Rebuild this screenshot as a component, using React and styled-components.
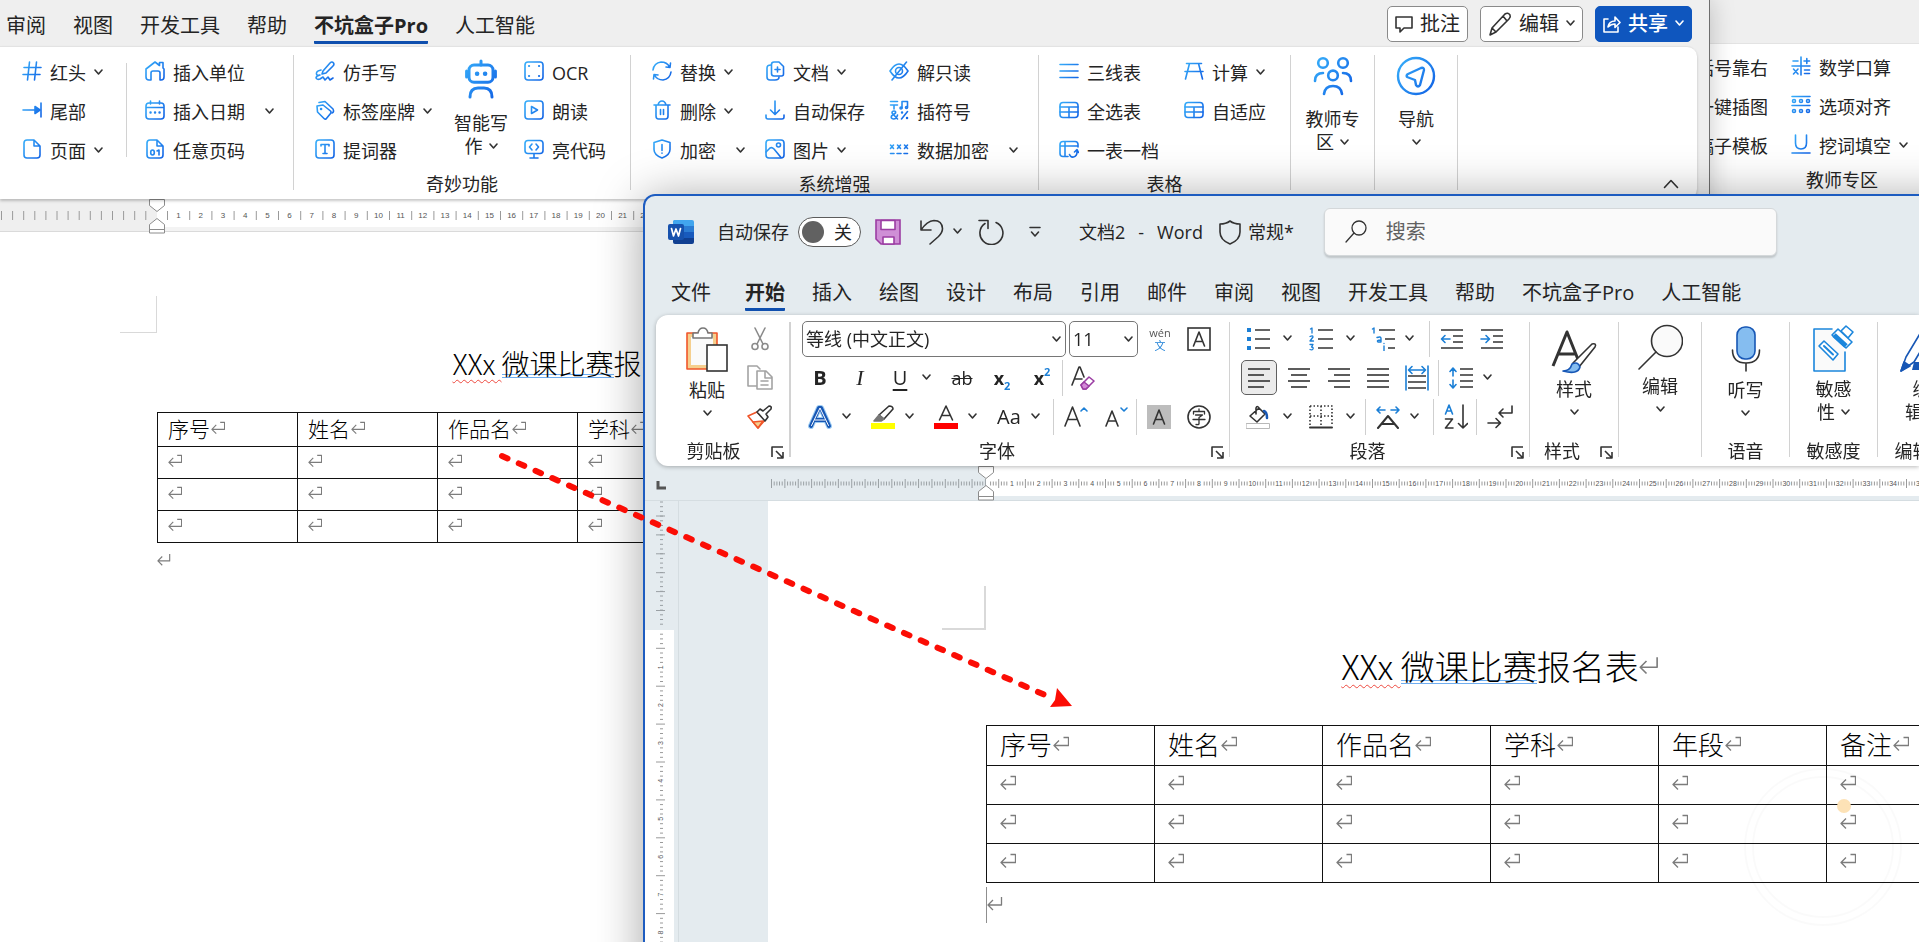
import React from "react";
import styled, { createGlobalStyle, css } from "styled-components";

const Global = createGlobalStyle`
  * { box-sizing: border-box; }
  body {
    margin: 0;
    background: #fff;
    color: #242424;
    font-family: "Open Sans", "Noto Sans CJK SC", sans-serif;
    font-size: 18px;
    line-height: 24px;
  }
  button, input, select { font: inherit; color: inherit; }
`;

/* ---------- shared pieces ---------- */

const Desktop = styled.main`
  position: relative;
  min-height: 100vh;
  overflow: hidden;
  background: #efefef;
`;

const Window = styled.section`
  position: absolute;
  isolation: isolate;
  overflow: hidden;
  bottom: 0;
  display: flex;
  flex-direction: column;
`;

const BackWindow = styled(Window)`
  top: 0;
  right: 0;
  width: 240px;
  background: #efefef;
`;

const SourceWindow = styled(Window)`
  top: 0;
  left: 0;
  right: 209px;
  background: #efefef;
  border-right: 1px solid #6e6e6e;
  box-shadow: 0 0 24px rgba(0, 0, 0, 0.22);
`;

const TargetWindow = styled(Window)`
  top: 194px;
  left: 643px;
  right: -2px;
  background: #e4ebef;
  border: 2px solid #1d5cc0;
  border-bottom: 0;
  border-radius: 12px 0 0 0;
`;

const TargetShadow = styled.div`
  position: absolute;
  top: 194px;
  left: 643px;
  right: -80px;
  bottom: -80px;
  border-radius: 12px;
  box-shadow: 0 4px 48px rgba(0, 0, 0, 0.36);
`;

const Plain = styled.button`
  border: 0;
  padding: 0;
  background: none;
  cursor: pointer;
  white-space: nowrap;
`;

const Tab = styled(Plain)`
  font-size: 20px;
  line-height: 30px;
  height: 34px;
  font-weight: ${(p) => (p.$active ? 700 : 400)};
  border-bottom: 3px solid ${(p) => (p.$active ? "#0f4fae" : "transparent")};
  border-radius: 1px;
`;

const Divider = styled.span`
  flex: none;
  width: ${(p) => (p.$thin ? 1 : 2)}px;
  background: #d2d2d2;
  margin: ${(p) => p.$m || "8px 0 9px"};
`;

const Group = styled.section`
  flex: none;
  display: flex;
  flex-direction: column;
  width: ${(p) => p.$w}px;
`;

const GroupLabel = styled.footer`
  display: flex;
  justify-content: center;
  align-items: center;
  line-height: 26px;
  position: relative;
`;

const Columns = styled.div`
  display: flex;
  height: 124px;
  padding: 6px 0 0 ${(p) => p.$pad || 0}px;
`;

const Stack = styled.div`
  flex: none;
  width: ${(p) => p.$w}px;
`;

const Inset = styled.div`
  padding-left: ${(p) => p.$pad}px;
`;

const Item = styled(Plain)`
  display: flex;
  align-items: center;
  height: 39px;
  gap: 8px;
  > svg:first-child { margin-bottom: 3px; }
`;

const Far = styled.span`
  display: flex;
  margin-left: ${(p) => p.$gap}px;
`;

const BigButton = styled(Plain)`
  flex: none;
  width: ${(p) => p.$w}px;
  display: flex;
  flex-direction: column;
  align-items: center;
  padding-top: ${(p) => p.$top || 3}px;
  line-height: 23px;
  > svg { margin-bottom: ${(p) => p.$gap || 0}px; }
`;

const BigLine = styled.span`
  display: flex;
  align-items: center;
  gap: 6px;
  height: 23px;
`;

const Svg = styled.svg`
  flex: none;
  display: block;
  fill: none;
  stroke: ${(p) => (p.$blue ? "url(#sky)" : p.$color || "#333")};
  stroke-width: ${(p) => p.$weight || "1.6"};
  stroke-linecap: round;
  stroke-linejoin: round;
`;

const Chevron = () => (
  <Svg width="9" height="8" viewBox="0 0 9 8" aria-hidden="true">
    <path d="M1 1l3.500 4L8 1" />
  </Svg>
);

const B = "url(#sky)";
const ICONS = {
  hash: <path d="M7.500 1L5.500 19M14.500 1L12.500 19M2 6.500h17M1 13.500h17" />,
  tail: <><path d="M1 10h12M19 3v14" /><path d="M13 6.500l5 3.500-5 3.500z" fill={B} /></>,
  page: <path d="M5 1h7l6 6v9q0 3-3 3H5q-3 0-3-3V4q0-3 3-3zM12 1.500V7h5.500" />,
  home: <path d="M1 8l9-7 4.500 3.500V1.500H18V7l1 1v8q0 3-3 3h-1v-7q0-2-2-2H8q-2 0-2 2v7H4q-3 0-3-3z" />,
  date: <><path d="M4 3h12q3 0 3 3v10q0 3-3 3H4q-3 0-3-3V6q0-3 3-3zM1 7.500h18M5.500 1v3M14.500 1v3" /><path d="M5.500 12.500h.1M10 12.500h.1M14.500 12.500h.1" strokeWidth="2.400" /></>,
  num: <><path d="M5 1h7l6 6v9q0 3-3 3H5q-3 0-3-3V4q0-3 3-3zM12 1.500V7h5.500" /><ellipse cx="7.500" cy="13.500" rx="1.800" ry="2.500" /><path d="M12 12l2-1v5" /></>,
  hand: <><path d="M8 10l7-8q2-2 3.500 0 1 1.500-.5 3l-7 7-4 1z" /><path d="M6 9q-5 1-4.500 4Q2 15 5 14q-4 1-4 3 1 2 4 1l3-2 2 3 3-3 2 3 3-2" /></>,
  tag: <><path d="M4 2.500L10 1.500l8 7.500q1.500 3-1 4" /><path d="M2 6l6-1 7.500 6q1 1 0 2.500L11 19q-1 .5-2-.5L2.500 12z" /><path d="M6 9h.1" strokeWidth="2.500" /></>,
  T: <><rect x="1" y="1" width="18" height="18" rx="3" /><path d="M6 7V5.500h8V7M10 5.500v9M8 14.500h4" /></>,
  ocr: <><rect x="1" y="1" width="18" height="18" rx="3" /><path d="M5 5h.1M15 5h.1M5 15h.1M15 15h.1" strokeWidth="2.200" /></>,
  play: <><rect x="1" y="1" width="18" height="18" rx="3" /><path d="M7.500 6.500v7l6-3.500z" /></>,
  code: <><path d="M4 1.500h12q3 0 3 3v7q0 3-3 3H4q-3 0-3-3v-7q0-3 3-3zM10 15v4M6 19h8" /><path d="M8 5L5.500 8 8 11M12 5l2.500 3-2.500 3" /></>,
  swap: <path d="M1 9q1-7 8-8 6 0 8.500 5M18.500 2l-.5 4.500-4-.5M19 11q-1 7-8 8-6 0-8.500-5M1.500 18l.5-4.500 4 .5" />,
  trash: <path d="M2 5h16M6 5q1-4 4-4t4 4M4 5v11q0 3 2.500 3h7q2.500 0 2.500-3V5M8.500 9.500v5M11.500 9.500v5" />,
  shield: <><path d="M10 1l8 2.500v7q0 5.500-8 8.500-8-3-8-8.500v-7z" /><path d="M10 5.500v6M10 14v.2" /></>,
  docs: <><path d="M9 1h5l4.500 4.500V13q0 2-2 2H9q-2.500 0-2.500-2.500v-9Q6.500 1 9 1z" /><path d="M6 4Q2 4 2 7v9q0 3 3 3h5q4 0 4-3M12.500 6v5M10 8.500h5" /></>,
  down: <path d="M10 1v13M5.500 10l4.500 4.500 4.500-4.500M1 15v2q0 2 2 2h14q2 0 2-2v-2" />,
  image: <><rect x="1" y="1" width="18" height="18" rx="3" /><circle cx="13.500" cy="6" r="2" /><path d="M1 13l4-4q2-1 4 1l7 8.500" /></>,
  eye: <><path d="M1 10q9-14 18 0-9 14-18 0z" /><circle cx="10" cy="10" r="3.500" /><path d="M17.500 1L3 19" /></>,
  symbols: <><path d="M1.500 1.500h7M1.500 5h7M5 5v4M13 8V1.500h5.500V7" /><circle cx="12" cy="8" r="1" /><circle cx="17.500" cy="7.500" r="1" /><path d="M8.500 19L3 13q0-2 2-2t1.500 2L2.500 16q-1 2.500 2 3 3 0 4-4M12.500 19l6-7.500" /><path d="M13 12.500h.1M18 18h.1" strokeWidth="2.400" /></>,
  data: <path d="M1.500 6l3 3.500M4.500 6l-3 3.500M8.500 6l3 3.500M11.500 6l-3 3.500M15.500 6l3 3.500M18.500 6l-3 3.500M1.500 14.500h3.500M8 14.500h4M15 14.500h3.500" />,
  lines: <path d="M1 3.500h18M1 10h18M1 16.500h18" />,
  table: <><rect x="1" y="2.500" width="18" height="15" rx="3" /><path d="M1 7h18M1 12h18M10 7v10.500" /></>,
  tableArrow: <><path d="M9 17.500H4q-3 0-3-3v-9q0-3 3-3h12q3 0 3 3V8M1 7h18M6 2.500v15" /><path d="M10.500 15.500q1 3 4 2.500 4-1 3.500-6.500M15.500 13l2.500-2.500 1.500 3" /></>,
  calc: <path d="M2.500 2.500h15M1 10.500h18M5.500 2.500L1.500 18M14.500 2.500l4 15.500" />,
  math: <path d="M10 1v18M1 10h18M2 5h5M13 5h5.500M15.800 2.500v5M2.500 13l4.500 5M7 13l-4.500 5M13.500 14h5M13.500 17.500h5" />,
  options: <><path d="M1 1.500h18M1 10.500h18" /><circle cx="3" cy="6" r="1.500" /><circle cx="10" cy="6" r="1.500" /><circle cx="17" cy="6" r="1.500" /><circle cx="3" cy="16" r="1.500" /><circle cx="10" cy="16" r="1.500" /><circle cx="17" cy="16" r="1.500" /></>,
  under: <path d="M4.500 1v8q0 6 5.500 6t5.500-6V1M1 19h18" />,
};

const Icon = ({ name }) => (
  <Svg $blue width="20" height="20" viewBox="0 0 20 20" aria-hidden="true">
    {ICONS[name]}
  </Svg>
);

const RibbonItem = ({ icon, label, menu, far = 0 }) => (
  <Item type="button">
    <Icon name={icon} />
    <span>{label}</span>
    {menu && <Far $gap={far}><Chevron /></Far>}
  </Item>
);

/* ---------- rulers and paragraph marks ---------- */

const RulerStrip = styled.div`
  flex: none;
  display: flex;
  position: relative;
  height: ${(p) => p.$h}px;
  border-bottom: 1px solid ${(p) => p.$line};
`;

const RulerPart = styled.div`
  flex: ${(p) => (p.$w ? "none" : "1")};
  width: ${(p) => (p.$w ? p.$w + "px" : "auto")};
  min-width: 0;
  overflow: hidden;
  background: ${(p) => p.$bg};
  border-bottom: ${(p) => (p.$edge ? "4px solid " + p.$edge : "0")};
`;

const IndentMarker = styled.svg`
  position: absolute;
  top: 0;
  left: ${(p) => p.$x}px;
  fill: #fff;
  stroke: #8c8c8c;
`;

const RulerSvg = styled.svg`
  display: block;
  text {
    fill: #555;
    font-family: "Liberation Sans", sans-serif;
    text-anchor: middle;
  }
`;

const Marker = ({ x }) => (
  <IndentMarker $x={x} width="16" height="35" viewBox="0 0 16 35" aria-hidden="true">
    <path d="M.5 .5h15v6L8 12.500 .5 6.500zM.5 25.500L8 19.500l7.500 6v8.500H.5zM.5 30.500h15" />
  </IndentMarker>
);

const range = (n) => Array.from({ length: n }, (_, i) => i);

const SourceRuler = () => (
  <RulerStrip $h={33} $line="#dadada">
    <RulerPart $w={157} $bg="#efefef">
      <RulerSvg width="157" height="30">
        {range(14).map((i) => <path key={i} d={`M${1.5 + i * 11.1} 12v9`} stroke="#9a9a9a" />)}
      </RulerSvg>
    </RulerPart>
    <RulerPart $bg="#fff" $edge="#f3f3f3">
      <RulerSvg width="1500" height="29">
        {range(60).map((i) => (
          <g key={i}>
            <path d={`M${10.5 + i * 22.2} 12v9`} stroke="#9a9a9a" />
            <text x={21.6 + i * 22.2} y="19" fontSize="8">{i + 1}</text>
          </g>
        ))}
      </RulerSvg>
    </RulerPart>
    <Marker x={149} />
  </RulerStrip>
);

const MINOR = [2.7, 5.4, 8.1, 18.6, 21.3, 24];

const TargetRuler = () => (
  <RulerStrip $h={35} $line="#d5dde1">
    <RulerPart $w={341} $bg="#e4ebef">
      <RulerSvg width="341" height="34">
        <path d="M13 15v7h8" stroke="#555" strokeWidth="3" fill="none" />
        {range(17).map((i) => (
          <g key={i} stroke="#9aa0a4">
            <path d={`M${126.5 + i * 13.37} 13v9`} />
            {[2.7, 5.4, 8, 10.7].map((d) => (
              <path key={d} d={`M${126.5 + i * 13.37 + d} 15.500v4`} />
            ))}
          </g>
        ))}
      </RulerSvg>
    </RulerPart>
    <RulerPart $bg="#fff" $edge="#e4ebef">
      <RulerSvg width="1400" height="30">
        {range(50).map((i) => (
          <g key={i} stroke="#9a9a9a">
            {MINOR.map((d) => (
              <path key={d} d={`M${12.7 + (i - 1) * 26.7 + d} 15.500v4`} />
            ))}
            <path d={`M${12.7 + i * 26.7} 13v9`} />
            <text x={26 + i * 26.7} y="20" fontSize="7" stroke="none">{i + 1}</text>
          </g>
        ))}
      </RulerSvg>
    </RulerPart>
    <Marker x={333} />
  </RulerStrip>
);

const SideRulerBox = styled.div`
  flex: none;
  width: 34px;
  padding-right: 4px;
  border-right: 1px solid #d5dde1;
`;

const SideRuler = () => (
  <SideRulerBox>
    <RulerSvg width="29" height="900">
      <rect x="0" y="129" width="29" height="771" fill="#fff" />
      {range(6).map((i) => <path key={i} d={`M11 ${15 + i * 18.9}h9`} stroke="#9aa0a4" />)}
      {range(27).map((i) => <path key={i} d={`M15 ${1 + i * 4.7}h3`} stroke="#9aa0a4" />)}
      {range(16).map((i) => (
        <g key={i} stroke="#9a9a9a">
          <path d={`M11 ${147.3 + i * 37.9}h9`} />
          {[-14.1, -9.4, -4.7, 4.7, 9.4, 14.1].map((d) => (
            <path key={d} d={`M15 ${147.3 + i * 37.9 + d}h3`} />
          ))}
          <text transform={`translate(18 ${166.2 + i * 37.9}) rotate(-90)`} fontSize="7" stroke="none">
            {i + 1}
          </text>
        </g>
      ))}
    </RulerSvg>
  </SideRulerBox>
);

const CellMark = ({ s = 16 }) => (
  <Svg $color="#7c7c7c" $weight="1.3" width={s} height={s} viewBox="0 0 16 16" aria-hidden="true">
    <path d="M10.500 1.500h5v8H1M6 4.500l-5 5 5 5" strokeLinecap="butt" />
  </Svg>
);

const ParagraphMark = ({ s = 16 }) => (
  <Svg $color="#7c7c7c" $weight="1.3" width={s} height={s} viewBox="0 0 16 16" aria-hidden="true">
    <path d="M14.500 1v8H1M6 4L1 9l5 5" strokeLinecap="butt" />
  </Svg>
);

/* ---------- document ---------- */

const Page = styled.article`
  flex: 1;
  min-width: 0;
  background: #fff;
  padding-left: ${(p) => p.$pad}px;
  overflow: hidden;
  color: #000;
  font-weight: 300;
  font-family: "Noto Sans CJK SC", sans-serif;
`;

const Corner = styled.div`
  width: ${(p) => p.$s}px;
  height: ${(p) => p.$s}px;
  margin: ${(p) => p.$top}px 0 0 -${(p) => p.$s}px;
  border: solid #d9d9d9;
  border-width: 0 ${(p) => p.$b}px ${(p) => p.$b}px 0;
`;

const Title = styled.h1`
  width: ${(p) => p.$w}px;
  height: 44px;
  margin: ${(p) => p.$m};
  display: flex;
  justify-content: center;
  align-items: center;
  font-size: ${(p) => p.$size}px;
  line-height: 44px;
  font-weight: 300;
  white-space: pre;
`;

const Misspelt = styled.span`
  text-decoration: underline wavy #ee4a40 1px;
  text-underline-offset: 4px;
`;

const Flagged = styled.span`
  line-height: 0.8;
  margin-top: 4px;
  border-bottom: 4px double #6fadf0;
`;

const TitleMark = styled.span`
  width: 0;
`;

const Sheet = styled.table`
  width: ${(p) => p.$w}px;
  table-layout: fixed;
  border-collapse: collapse;
  font-size: ${(p) => p.$size}px;
  th, td {
    height: ${(p) => p.$row}px;
    border: 1px solid #111;
    padding: 0 0 4px ${(p) => p.$pad}px;
    text-align: left;
    font-weight: 300;
    line-height: 28px;
  }
  th { height: ${(p) => p.$head}px; }
`;

const CellText = styled.span`
  display: flex;
  align-items: center;
  gap: 1px;
`;

const LastLine = styled.p`
  margin: ${(p) => p.$top}px 0 0;
  height: 36px;
  display: flex;
  align-items: center;
  padding-bottom: 2px;
  border-left: ${(p) => (p.$caret ? "1px solid #8f8f8f" : "0")};
`;

const HEADERS = ["序号", "姓名", "作品名", "学科", "年段", "备注"];

const EntryTable = ({ mark, ...sizes }) => (
  <Sheet {...sizes}>
    <thead>
      <tr>
        {HEADERS.map((h) => (
          <th key={h} scope="col"><CellText>{h}<CellMark s={mark} /></CellText></th>
        ))}
      </tr>
    </thead>
    <tbody>
      {range(3).map((r) => (
        <tr key={r}>
          {HEADERS.map((h) => <td key={h}><CellText><CellMark s={mark} /></CellText></td>)}
        </tr>
      ))}
    </tbody>
  </Sheet>
);

const DocTitle = (props) => (
  <Title {...props}>
    <Misspelt>XXx </Misspelt>
    <Flagged>微课比赛</Flagged>
    <span>报名表</span>
    <TitleMark><ParagraphMark s={20} /></TitleMark>
  </Title>
);

/* ---------- source window ---------- */

const TopBar = styled.header`
  flex: none;
  display: flex;
  align-items: center;
  height: ${(p) => p.$h || 46}px;
`;

const SourceTabs = styled.nav`
  flex: 1;
  display: flex;
  gap: 27px;
  padding: 8px 0 0 6px;
`;

const Actions = styled.div`
  display: flex;
  gap: 12px;
  padding: 2px 17px 0 0;
`;

const Action = styled(Plain)`
  display: flex;
  align-items: center;
  gap: 7px;
  height: 36px;
  padding: 0 7px;
  font-size: 20px;
  background: #fff;
  border: 1px solid #8a8a8a;
  border-radius: 5px;
  ${(p) =>
    p.$primary &&
    css`
      background: #0f56be;
      border-color: #0f56be;
      color: #fff;
      font-weight: 500;
      svg { stroke: #fff; }
    `}
`;

const SourceRibbon = styled.div`
  flex: none;
  display: flex;
  height: 153px;
  margin-right: 12px;
  padding-left: 22px;
  background: #fff;
  border-top: 1px solid #e3e3e3;
  border-radius: 0 10px 10px 0;
  box-shadow: 0 2px 3px rgba(0, 0, 0, 0.22);
  position: relative;
  z-index: 1;
`;

const Collapse = styled(Plain)`
  margin: auto 18px 10px auto;
`;

const People = () => (
  <Svg $blue $weight="1.3" width="40" height="40" viewBox="0 0 20 20" aria-hidden="true">
    <circle cx="5" cy="3.500" r="2.400" /><circle cx="15" cy="3.500" r="2.400" /><circle cx="10" cy="9.700" r="2.400" />
    <path d="M1 12.500q0-4 4-4M19 12.500q0-4-4-4M5.500 19q.5-4 4.500-4t4.500 4" />
  </Svg>
);
const Compass = () => (
  <Svg $blue $weight="1.2" width="40" height="40" viewBox="0 0 20 20" aria-hidden="true">
    <circle cx="10" cy="10" r="9" />
    <path d="M5.500 10.500q-.5-1 .5-1.500l6.500-3q1.500-.5 1.500 1l-2 7.500q-1 1.500-2 0L9.500 12z" />
  </Svg>
);
const Robot = () => (
  <Svg $blue $weight="1.5" width="40" height="40" viewBox="0 0 20 20" aria-hidden="true">
    <rect x="4" y="3" width="12" height="8.600" rx="2.500" />
    <path d="M10 1v2M2.800 6v3M17.200 6v3M4.500 19q0-4.500 4-4.500h3q4 0 4 4.500" />
    <path d="M8 7.400h.1M12 7.400h.1" strokeWidth="2.200" />
  </Svg>
);

const SourceApp = () => (
  <SourceWindow aria-label="源文档">
    <TopBar>
      <SourceTabs>
        {["审阅", "视图", "开发工具", "帮助", "不坑盒子Pro", "人工智能"].map((t) => (
          <Tab key={t} type="button" $active={t === "不坑盒子Pro"}>{t}</Tab>
        ))}
      </SourceTabs>
      <Actions>
        <Action type="button">
          <Svg width="18" height="18" viewBox="0 0 18 18"><path d="M1 2h16v11H9l-4 4v-4H1z" /></Svg>批注
        </Action>
        <Action type="button">
          <Svg width="24" height="26" viewBox="0 0 24 26"><path d="M2 24l2-7L17 3q3-2 5 1 1 2-1 4L8 21zM4 17l4 4M15 5l4 5" /></Svg>编辑<Chevron />
        </Action>
        <Action type="button" $primary>
          <Svg width="18" height="18" viewBox="0 0 18 18"><path d="M5 4H1v13h14v-5M5 12q1-6 7-6V2l5 5.500-5 5V9q-4 0-7 3z" /></Svg>共享<Chevron />
        </Action>
      </Actions>
    </TopBar>
    <SourceRibbon>
      <Group $w={271}>
        <Columns>
          <Stack $w={104}>
            <RibbonItem icon="hash" label="红头" menu />
            <RibbonItem icon="tail" label="尾部" />
            <RibbonItem icon="page" label="页面" menu />
          </Stack>
          <Divider $thin $m="10px 0 14px" />
          <Inset $pad={18}>
            <RibbonItem icon="home" label="插入单位" />
            <RibbonItem icon="date" label="插入日期" menu far={12} />
            <RibbonItem icon="num" label="任意页码" />
          </Inset>
        </Columns>
      </Group>
      <Divider $thin />
      <Group $w={336}>
        <Columns $pad={21}>
          <Stack $w={139}>
            <RibbonItem icon="hand" label="仿手写" />
            <RibbonItem icon="tag" label="标签座牌" menu />
            <RibbonItem icon="T" label="提词器" />
          </Stack>
          <BigButton type="button" $w={54} $top={6} $gap={13}>
            <Robot />
            <BigLine>智能写</BigLine>
            <BigLine>作<Chevron /></BigLine>
          </BigButton>
          <Inset $pad={16}>
            <RibbonItem icon="ocr" label="OCR" />
            <RibbonItem icon="play" label="朗读" />
            <RibbonItem icon="code" label="亮代码" />
          </Inset>
        </Columns>
        <GroupLabel>奇妙功能</GroupLabel>
      </Group>
      <Divider $thin />
      <Group $w={407}>
        <Columns $pad={21}>
          <Stack $w={113}>
            <RibbonItem icon="swap" label="替换" menu />
            <RibbonItem icon="trash" label="删除" menu />
            <RibbonItem icon="shield" label="加密" menu far={12} />
          </Stack>
          <Stack $w={124}>
            <RibbonItem icon="docs" label="文档" menu />
            <RibbonItem icon="down" label="自动保存" />
            <RibbonItem icon="image" label="图片" menu />
          </Stack>
          <Stack $w={128}>
            <RibbonItem icon="eye" label="解只读" />
            <RibbonItem icon="symbols" label="插符号" />
            <RibbonItem icon="data" label="数据加密" menu far={12} />
          </Stack>
        </Columns>
        <GroupLabel>系统增强</GroupLabel>
      </Group>
      <Divider $thin />
      <Group $w={251}>
        <Columns $pad={20}>
          <Stack $w={125}>
            <RibbonItem icon="lines" label="三线表" />
            <RibbonItem icon="table" label="全选表" />
            <RibbonItem icon="tableArrow" label="一表一档" />
          </Stack>
          <Stack $w={100}>
            <RibbonItem icon="calc" label="计算" menu />
            <RibbonItem icon="table" label="自适应" />
          </Stack>
        </Columns>
        <GroupLabel>表格</GroupLabel>
      </Group>
      <Divider $thin />
      <Group $w={83}>
        <BigButton type="button" $w={83} $top={9} $gap={12}>
          <People />
          <BigLine>教师专</BigLine>
          <BigLine>区<Chevron /></BigLine>
        </BigButton>
      </Group>
      <Divider $thin />
      <Group $w={82}>
        <BigButton type="button" $w={82} $top={9} $gap={12}>
          <Compass />
          <BigLine>导航</BigLine>
          <BigLine><Chevron /></BigLine>
        </BigButton>
      </Group>
      <Divider $thin />
      <Collapse type="button" aria-label="折叠功能区">
        <Svg width="16" height="10" viewBox="0 0 16 10"><path d="M1.500 8.500L8 1.500l6.500 7" /></Svg>
      </Collapse>
    </SourceRibbon>
    <SourceRuler />
    <Page $pad={157}>
      <Corner $s={37} $b={1} $top={64} />
      <DocTitle $w={836} $size={28} $m="8px 0 27px" />
      <EntryTable mark={14} $w={841} $size={21} $row={32} $head={34} $pad={10} />
      <LastLine $top={0}><ParagraphMark s={14} /></LastLine>
    </Page>
  </SourceWindow>
);

/* ---------- back window ---------- */

const BackRibbon = styled.div`
  flex: none;
  display: flex;
  height: 156px;
  padding: 4px 0 0 17px;
  background: #fff;
  border-top: 1px solid #e3e3e3;
`;

const BackLabel = styled(GroupLabel)`
  padding-top: 2px;
`;

const BackApp = () => (
  <BackWindow aria-label="后台文档">
    <TopBar $h={43} />
    <BackRibbon>
      <Stack $w={95}>
        <Item type="button">括号靠右</Item>
        <Item type="button">一键插图</Item>
        <Item type="button">稿子模板</Item>
      </Stack>
      <Group $w={102}>
        <RibbonItem icon="math" label="数学口算" />
        <RibbonItem icon="options" label="选项对齐" />
        <RibbonItem icon="under" label="挖词填空" menu />
        <BackLabel>教师专区</BackLabel>
      </Group>
    </BackRibbon>
  </BackWindow>
);

/* ---------- target window ---------- */

const TitleBar = styled.header`
  flex: none;
  display: flex;
  align-items: center;
  height: 72px;
  padding-left: 23px;
  > * { flex: none; }
`;

const AutoSave = styled.label`
  display: flex;
  align-items: center;
  gap: 9px;
  margin: 0 14px 0 22px;
  position: relative;
  input { position: absolute; opacity: 0; right: 0; width: 63px; height: 30px; margin: 0; }
`;

const SwitchTrack = styled.span`
  display: flex;
  align-items: center;
  justify-content: space-between;
  width: 63px;
  height: 30px;
  padding: 0 8px 0 3px;
  background: #fff;
  border: 1px solid #5c5c5c;
  border-radius: 15px;
  &::before {
    content: "";
    width: 22px;
    height: 22px;
    border-radius: 50%;
    background: #616161;
  }
`;

const ToolIcon = styled(Plain)`
  display: flex;
  align-items: center;
  gap: ${(p) => p.$gap || 9}px;
  margin-right: ${(p) => p.$mr || 0}px;
`;

const FileName = styled.span`
  display: flex;
  gap: 13px;
  margin-right: 16px;
`;

const Search = styled.label`
  display: flex;
  align-items: center;
  gap: 19px;
  width: 453px;
  height: 48px;
  margin-left: 30px;
  padding-left: 20px;
  background: #fafafa;
  border: 1px solid #d4d8da;
  border-radius: 6px;
  box-shadow: 0 2px 2px rgba(0, 0, 0, 0.16);
  input {
    flex: 1;
    min-width: 0;
    border: 0;
    outline: 0;
    padding: 0;
    background: none;
    font-size: 20px;
    &::placeholder { color: #616161; opacity: 1; }
  }
`;

const TargetTabs = styled.nav`
  flex: none;
  display: flex;
  gap: 27px;
  height: 47px;
  padding: 9px 0 4px 26px;
  > button:first-child { margin-right: 7px; }
`;

const TargetRibbon = styled.div`
  display: flex;
  height: 151px;
  margin-left: 11px;
  overflow: hidden;
  background: #fff;
  border-radius: 12px 0 0 12px;
`;

const RibbonShade = styled.div`
  flex: none;
  position: relative;
  z-index: 1;
  filter: drop-shadow(0 1px 2px rgba(0, 0, 0, 0.28));
`;

const HomeGroup = styled(Group)`
  padding-top: 4px;
`;

const ToolRow = styled.div`
  display: flex;
  align-items: center;
  height: 39px;
  padding-left: ${(p) => p.$pad || 0}px;
`;

const Tool = styled(Plain)`
  flex: none;
  display: flex;
  align-items: center;
  justify-content: center;
  width: ${(p) => p.$w || 40}px;
  height: 35px;
  font-size: 20px;
`;

const PressedTool = styled(Tool)`
  width: 36px;
  margin: 0 2px 0 1px;
  background: #ebebeb;
  border: 1px solid #5f5f5f;
  border-radius: 5px;
`;

const Split = styled(Plain)`
  flex: none;
  display: flex;
  align-items: center;
  gap: ${(p) => p.$gap || 10}px;
  width: ${(p) => p.$w || 63}px;
  height: 35px;
  padding-left: 8px;
  font-size: 20px;
  > :first-child { width: 24px; text-align: center; }
`;

const Bold = styled.b``;
const Italic = styled.i`
  font-family: "Liberation Serif", serif;
  font-size: 22px;
`;
const Under = styled.u`
  text-underline-offset: 4px;
`;
const Strike = styled.s`
  font-size: 18px;
`;
const Script = styled.span`
  font-weight: 700;
  font-size: 18px;
  sub, sup { color: #1b7fd6; font-size: 11px; line-height: 0; }
  sub { vertical-align: -5px; }
  sup { vertical-align: 9px; }
`;

const Pinyin = styled.span`
  display: flex;
  flex-direction: column;
  font-size: 11px;
  line-height: 13px;
  color: #555;
  em { font-style: normal; color: #1b7fd6; }
`;

const SelectBox = styled.span`
  display: flex;
  position: relative;
  width: ${(p) => p.$w}px;
  height: 36px;
  margin-right: 3px;
  select {
    flex: 1;
    appearance: none;
    padding: 0 20px 0 3px;
    background: #fff;
    border: 1px solid #767676;
    border-radius: 5px;
  }
  svg { position: absolute; right: 5px; top: 15px; pointer-events: none; }
`;

const Launcher = styled(Plain)`
  position: absolute;
  right: 5px;
  bottom: 5px;
`;

const HomeLabel = styled(GroupLabel)`
  margin-top: 2px;
  padding-right: ${(p) => p.$pr || 0}px;
`;

const SmallRule = styled.span`
  flex: none;
  width: 1px;
  height: 36px;
  background: #cfcfcf;
  margin: 0 ${(p) => p.$r || 0}px 0 ${(p) => p.$l || 0}px;
`;

const LaunchIcon = () => (
  <Launcher type="button" aria-label="更多设置">
    <Svg width="13" height="13" viewBox="0 0 13 13"><path d="M1 11V1h11M5 5l7 7M12 6v6H6" strokeLinecap="butt" /></Svg>
  </Launcher>
);

const HomeBig = styled(BigButton)`
  width: 100%;
  height: 117px;
`;

const Clip = styled.div`
  display: flex;
  height: 117px;
  padding-left: 21px;
`;

const ClipStack = styled.div`
  display: flex;
  flex-direction: column;
  gap: 4px;
  padding: 2px 0 0 9px;
`;

const Lines = ({ rows }) => (
  <Svg width="24" height="24" viewBox="0 0 24 24">
    {rows.map(([a, b], i) => <path key={i} d={`M${a} ${3 + i * 6}H${b}`} strokeLinecap="butt" />)}
  </Svg>
);

const BLUE = "#1b7fd6";

const Clipboard = () => (
  <HomeGroup $w={133}>
    <Clip>
      <BigButton type="button" $w={60} $top={7} $gap={3}>
        <Svg width="44" height="50" viewBox="0 0 44 50">
          <rect x="2" y="7" width="30" height="36" fill="#f5cf8e" stroke="#f0562a" />
          <path d="M6 11h22v28H6z" fill="#fafafa" stroke="none" />
          <path d="M8 12V7h5q1-5 5-5t5 5h4v5z" fill="#fff" stroke="#777" />
          <rect x="22" y="19" width="20" height="26" fill="#fff" strokeLinejoin="miter" />
        </Svg>
        <BigLine>粘贴</BigLine>
        <BigLine><Chevron /></BigLine>
      </BigButton>
      <ClipStack>
        <Tool type="button" $w={28} aria-label="剪切">
          <Svg $color="#8c8c8c" width="18" height="24" viewBox="0 0 18 24">
            <path d="M4 1l8 16M14 1L6 17" /><circle cx="4" cy="19.500" r="3" /><circle cx="14" cy="19.500" r="3" />
          </Svg>
        </Tool>
        <Tool type="button" $w={28} aria-label="复制">
          <Svg $color="#a3a3a3" width="26" height="26" viewBox="0 0 26 26">
            <path d="M10 21H1V1h9l3 3M10 6h9l6 6v12H10zM18 6v7h7M14 16h7M14 20h7" />
          </Svg>
        </Tool>
        <Tool type="button" $w={28} aria-label="格式刷">
          <Svg width="26" height="24" viewBox="0 0 26 24">
            <path d="M1 11l9-4 8 8-7 8z" fill="#fff" stroke="#f0562a" /><path d="M6 17l10-1-5 7z" fill="#f5cf8e" stroke="#f0562a" />
            <path d="M10 7l3-3 3 2 6-5q3 0 2 3l-5 5 2 3-3 4z" fill="#fff" />
          </Svg>
        </Tool>
      </ClipStack>
    </Clip>
    <HomeLabel $pr={18}>剪贴板<LaunchIcon /></HomeLabel>
  </HomeGroup>
);

const FontGroup = () => (
  <HomeGroup $w={438}>
    <ToolRow $pad={11}>
      <SelectBox $w={264}>
        <select aria-label="字体"><option>等线 (中文正文)</option></select><Chevron />
      </SelectBox>
      <SelectBox $w={69}>
        <select aria-label="字号"><option>11</option></select><Chevron />
      </SelectBox>
      <Tool type="button" $w={38}><Pinyin>wén<em>文</em></Pinyin></Tool>
      <Tool type="button" aria-label="字符边框">
        <Svg width="24" height="24" viewBox="0 0 24 24"><rect x="1" y="1" width="22" height="22" strokeLinejoin="miter" /><path d="M6.500 19L12 5l5.500 14M8.500 14.500h7" /></Svg>
      </Tool>
    </ToolRow>
    <ToolRow $pad={9}>
      <Tool type="button"><Bold>B</Bold></Tool>
      <Tool type="button"><Italic>I</Italic></Tool>
      <Split type="button" $w={62}><Under>U</Under><Chevron /></Split>
      <Tool type="button"><Strike>ab</Strike></Tool>
      <Tool type="button"><Script>x<sub>2</sub></Script></Tool>
      <Tool type="button"><Script>x<sup>2</sup></Script></Tool>
      <SmallRule />
      <Tool type="button" aria-label="清除格式">
        <Svg width="24" height="26" viewBox="0 0 24 26">
          <path d="M1 20L8 2h1l4 10M4 14h7" /><path d="M10 20l8-8 5 4-8 8h-3z" fill="#fff" stroke="#9b3da3" /><path d="M10 20l3-3 5 4-3 3h-3z" fill="#d48ad8" stroke="#9b3da3" />
        </Svg>
      </Tool>
    </ToolRow>
    <ToolRow $pad={9}>
      <Split type="button" aria-label="文本效果">
        <Svg width="24" height="24" viewBox="0 0 24 24"><path d="M3 21L11 3h2l8 18M7 15h10" stroke="#9ccbf2" strokeWidth="6" /><path d="M3 21L11 3h2l8 18M7 15h10" stroke="#1757b5" strokeWidth="4" /><path d="M3.500 20.500L12 3l8.500 17.500M7 15h10" stroke="#fff" strokeWidth="1" /></Svg><Chevron />
      </Split>
      <Split type="button" aria-label="突出显示">
        <Svg width="24" height="24" viewBox="0 0 24 24"><rect x="0" y="18" width="24" height="6" fill="#ff0" stroke="none" /><path d="M8 10L18 1q4 0 4 3l-9 10z" fill="#fff" /><path d="M8 10l5 4-3 2H3z" fill="#777" stroke="#777" /></Svg><Chevron />
      </Split>
      <Split type="button" aria-label="字体颜色">
        <Svg width="24" height="24" viewBox="0 0 24 24"><rect x="0" y="18" width="24" height="6" fill="#f00" stroke="none" /><path d="M5.500 15L12 1l6.500 14M8 10.500h8" /></Svg><Chevron />
      </Split>
      <Split type="button" $w={64}><span>Aa</span><Chevron /></Split>
      <SmallRule $r={2} />
      <Tool type="button" aria-label="增大字号">
        <Svg width="24" height="24" viewBox="0 0 24 24"><path d="M1 21L8.500 2 16 21M4 14.500h9" /><path d="M17 6l3-3 3 3" stroke={BLUE} /></Svg>
      </Tool>
      <Tool type="button" aria-label="减小字号">
        <Svg width="24" height="24" viewBox="0 0 24 24"><path d="M2 21L8 6l6 15M4 16h8" /><path d="M17 3l3 3 3-3" stroke={BLUE} /></Svg>
      </Tool>
      <SmallRule $r={2} />
      <Tool type="button" aria-label="字符底纹">
        <Svg width="24" height="24" viewBox="0 0 24 24"><rect width="24" height="24" fill="#bdbdbd" stroke="none" /><path d="M6.500 19L12 5l5.500 14M8.500 14.500h7" /></Svg>
      </Tool>
      <Tool type="button" aria-label="带圈字符">
        <Svg width="24" height="24" viewBox="0 0 24 24"><circle cx="12" cy="12" r="11" /><path d="M12 4v2.500M6.500 9V6.500h11V9M8.500 10h7L12 12.500V19q-1 1-3 .5M6 14.500h12" strokeWidth="1.300" /></Svg>
      </Tool>
    </ToolRow>
    <HomeLabel $pr={26}>字体<LaunchIcon /></HomeLabel>
  </HomeGroup>
);

const ParagraphGroup = () => (
  <HomeGroup $w={299}>
    <ToolRow $pad={8}>
      <Split type="button" $gap={13} aria-label="项目符号">
        <Svg width="24" height="24" viewBox="0 0 24 24"><path d="M9 3h15M9 12h15M9 21h15" strokeLinecap="butt" /><path d="M1 1h4v4H1zM1 10h4v4H1zM1 19h4v4H1z" fill={BLUE} stroke="none" /></Svg><Chevron />
      </Split>
      <Split type="button" $gap={13} $w={62} aria-label="编号">
        <Svg width="24" height="24" viewBox="0 0 24 24"><path d="M9 3h15M9 12h15M9 21h15" strokeLinecap="butt" /><path d="M1.500 2L3 1v5M1 9.500q3-1.500 3 .5L1 14h3.500M1 17.500h3L2.500 20q2 0 1.500 2-1 1.500-3 .5" stroke={BLUE} strokeWidth="1.300" /></Svg><Chevron />
      </Split>
      <Split type="button" $gap={10} $w={64} aria-label="多级列表">
        <Svg width="24" height="24" viewBox="0 0 24 24"><path d="M8 3h16M14 12h10M17 21h7" strokeLinecap="butt" /><path d="M1.500 2L3 1v5M6 10.500q4-1.500 4 1V15H7q-2-2 3-2M13 19v5M13 16.500v.1" stroke={BLUE} strokeWidth="1.400" /></Svg><Chevron />
      </Split>
      <SmallRule $l={2} $r={2} />
      <Tool type="button" aria-label="减少缩进">
        <Svg width="24" height="24" viewBox="0 0 24 24"><path d="M1 3h22M13 9h10M13 15h10M1 21h22" strokeLinecap="butt" /><path d="M10 12H2M5 8.500L1.500 12 5 15.500" stroke={BLUE} /></Svg>
      </Tool>
      <Tool type="button" aria-label="增加缩进">
        <Svg width="24" height="24" viewBox="0 0 24 24"><path d="M1 3h22M13 9h10M13 15h10M1 21h22" strokeLinecap="butt" /><path d="M1 12h8M6 8.500L9.500 12 6 15.500" stroke={BLUE} /></Svg>
      </Tool>
    </ToolRow>
    <ToolRow $pad={10}>
      <PressedTool type="button" aria-label="左对齐" aria-pressed="true"><Lines rows={[[1, 23], [1, 17], [1, 23], [1, 17]]} /></PressedTool>
      <Tool $w={40} type="button" aria-label="居中"><Lines rows={[[1, 23], [4, 20], [1, 23], [4, 20]]} /></Tool>
      <Tool $w={39} type="button" aria-label="右对齐"><Lines rows={[[1, 23], [7, 23], [1, 23], [7, 23]]} /></Tool>
      <Tool $w={39} type="button" aria-label="两端对齐"><Lines rows={[[1, 23], [1, 23], [1, 23], [1, 23]]} /></Tool>
      <Tool $w={40} type="button" aria-label="分散对齐">
        <Svg width="24" height="26" viewBox="0 0 24 26"><path d="M3 11h18M3 17h18M3 23h18" strokeLinecap="butt" /><path d="M1 1v24M23 1v24M4 5h16M7 1.500L3.500 5 7 8.500M17 1.500L20.500 5 17 8.500" stroke={BLUE} /></Svg>
      </Tool>
      <SmallRule $l={1} $r={2} />
      <Split type="button" aria-label="行距">
        <Svg width="24" height="24" viewBox="0 0 24 24"><path d="M11 3h13M11 9h13M11 15h13M11 21h13" strokeLinecap="butt" /><path d="M4 10V3M1 5.500L4 2l3 3.500M4 14v7M1 18.500L4 22l3-3.500" stroke={BLUE} /></Svg><Chevron />
      </Split>
    </ToolRow>
    <ToolRow $pad={8}>
      <Split type="button" $gap={13} aria-label="底纹">
        <Svg width="24" height="24" viewBox="0 0 24 24"><rect x=".5" y="18.500" width="23" height="5" fill="#fff" stroke="#b8b8b8" strokeWidth="1" /><path d="M4 11l9-8 6 6-8 8zM13 3q-2-3-3 0v6" /><path d="M18 6q3 1 3 7" stroke="#1757b5" strokeWidth="2.500" /></Svg><Chevron />
      </Split>
      <Split type="button" $gap={13} aria-label="边框">
        <Svg width="24" height="24" viewBox="0 0 24 24"><path d="M1 1h22v20M1 1v20M12 1v20M1 11h22" strokeDasharray="1.500 2" strokeLinecap="butt" /><path d="M1 22.500h22" strokeWidth="2" /></Svg><Chevron />
      </Split>
      <SmallRule $l={1} $r={2} />
      <Split type="button" aria-label="中文版式">
        <Svg width="24" height="24" viewBox="0 0 24 24"><path d="M2 23L12 11l10 12M6 19h12" strokeWidth="2" /><path d="M9 5H1M4 2L1 5l3 3M15 5h8M20 2l3 3-3 3" stroke={BLUE} /></Svg><Chevron />
      </Split>
      <SmallRule $l={2} $r={2} />
      <Tool type="button" aria-label="排序">
        <Svg width="24" height="26" viewBox="0 0 24 26"><path d="M1.500 10L5 1l3.500 9M3 7h4.500" stroke={BLUE} /><path d="M1.500 15h7l-7 9h7.500M19 1v23M14.500 19.500L19 24l4.500-4.500" /></Svg>
      </Tool>
      <SmallRule $r={2} />
      <Tool type="button" $w={42} aria-label="显示编辑标记">
        <Svg width="26" height="24" viewBox="0 0 26 24"><path d="M25 1v7H12M16 4l-4 4 4 4M1 18h12M9 13.500l4.500 4.500L9 22.500" /></Svg>
      </Tool>
    </ToolRow>
    <HomeLabel $pr={24}>段落<LaunchIcon /></HomeLabel>
  </HomeGroup>
);

const Workspace = styled.div`
  flex: 1;
  min-height: 0;
  display: flex;
`;

const Gutter = styled.div`
  flex: none;
  width: 89px;
`;

const TargetApp = () => (
  <TargetWindow aria-label="文档2">
    <TitleBar>
      <Svg $color="none" width="27" height="26" viewBox="0 0 27 26" aria-label="Word">
        <path d="M6 1h18q2 0 2 2v4H5V2z" fill="#41a5ee" /><path d="M5 7h21v6H5z" fill="#2b7cd3" /><path d="M5 13h21v6H5z" fill="#185abd" /><path d="M5 19h21v4q0 2-2 2H7q-2 0-2-2z" fill="#103f91" />
        <rect x="0" y="5" width="16" height="16" rx="2" fill="#1651ad" />
        <path d="M3.500 9.500l2 7.500L8 10l2.500 7 2-7.500" stroke="#fff" strokeWidth="1.700" />
      </Svg>
      <AutoSave>
        自动保存
        <input type="checkbox" role="switch" />
        <SwitchTrack>关</SwitchTrack>
      </AutoSave>
      <ToolIcon type="button" $mr={19} aria-label="保存">
        <Svg width="26" height="26" viewBox="0 0 26 26"><path d="M1 1h24v24H6l-5-5z" fill="#cf8fd6" stroke="#9b3da3" strokeLinejoin="miter" /><path d="M6 1.500h14v9H6zM8 25v-7h11v7z" fill="#fff" stroke="#9b3da3" /></Svg>
      </ToolIcon>
      <ToolIcon type="button" $mr={16} aria-label="撤消">
        <Svg width="24" height="26" viewBox="0 0 24 26"><path d="M1 2v9h10M1 11Q7 2 14 1.500q8 0 8.500 8 0 4-4 8L10 25" /></Svg><Chevron />
      </ToolIcon>
      <ToolIcon type="button" $mr={25} aria-label="重复">
        <Svg width="26" height="26" viewBox="0 0 26 26"><path d="M18 3.500A11.500 11.500 0 1 1 7 4.500M1 1.500h9v8" /></Svg>
      </ToolIcon>
      <ToolIcon type="button" $mr={38} aria-label="自定义快速访问工具栏">
        <Svg width="12" height="12" viewBox="0 0 12 12"><path d="M1 1.500h10M2.500 6L6 10l3.500-4" /></Svg>
      </ToolIcon>
      <FileName><span>文档2</span><span>-</span><span>Word</span></FileName>
      <ToolIcon type="button" $gap={7}>
        <Svg width="22" height="25" viewBox="0 0 22 25"><path d="M11 1q4 3 10 3v8q0 8-10 12Q1 20 1 12V4q6 0 10-3z" /></Svg>常规*
      </ToolIcon>
      <Search>
        <Svg $weight="1.3" width="22" height="24" viewBox="0 0 22 24"><circle cx="14" cy="8" r="7" /><path d="M9 13L1 22" /></Svg>
        <input type="text" placeholder="搜索" aria-label="搜索" />
      </Search>
    </TitleBar>
    <TargetTabs>
      {["文件", "开始", "插入", "绘图", "设计", "布局", "引用", "邮件", "审阅", "视图", "开发工具", "帮助", "不坑盒子Pro", "人工智能"].map((t) => (
        <Tab key={t} type="button" $active={t === "开始"}>{t}</Tab>
      ))}
    </TargetTabs>
    <RibbonShade>
      <TargetRibbon>
        <Clipboard />
        <Divider $m="7px 0 9px" />
        <FontGroup />
        <Divider $thin $m="7px 0 9px" />
        <ParagraphGroup />
        <Divider $thin $m="7px 0 9px" />
        <HomeGroup $w={88}>
          <HomeBig type="button" $top={11} $gap={3}>
            <Svg width="46" height="45" viewBox="0 0 46 45">
              <path d="M2 36L16 2l12 30M7 24h17" strokeWidth="3" strokeLinecap="butt" />
              <path d="M22 33L41 14q5-1 3 3L28 37z" fill="#fff" /><path d="M12 41q7 0 9-7 6-3 8 3-2 8-17 4z" fill="#85bdf0" stroke="#1757b5" />
            </Svg>
            <BigLine>样式</BigLine>
            <BigLine><Chevron /></BigLine>
          </HomeBig>
          <HomeLabel $pr={24}>样式<LaunchIcon /></HomeLabel>
        </HomeGroup>
        <Divider $thin $m="7px 0 9px" />
        <HomeGroup $w={82}>
          <HomeBig type="button" $top={5} $gap={5}>
            <Svg width="45" height="46" viewBox="0 0 45 46"><circle cx="29" cy="17" r="15.500" fill="#fafafa" /><path d="M18 28L1 45" /></Svg>
            <BigLine>编辑</BigLine>
            <BigLine><Chevron /></BigLine>
          </HomeBig>
        </HomeGroup>
        <Divider $thin $m="7px 0 9px" />
        <HomeGroup $w={87}>
          <HomeBig type="button" $top={5} $gap={5}>
            <Svg width="30" height="50" viewBox="0 0 30 50"><rect x="6" y="3" width="18" height="32" rx="8" fill="#85bdf0" stroke="#1757b5" /><path d="M1.500 26q0 13 13.500 13t13.500-13M15 39v8" /></Svg>
            <BigLine>听写</BigLine>
            <BigLine><Chevron /></BigLine>
          </HomeBig>
          <HomeLabel>语音</HomeLabel>
        </HomeGroup>
        <Divider $thin $m="7px 0 9px" />
        <HomeGroup $w={87}>
          <HomeBig type="button" $top={5} $gap={5}>
            <Svg $color="#1b86dc" width="44" height="49" viewBox="0 0 44 49">
              <path d="M20 5H2v42h31V28" fill="#fafafa" /><path d="M7 22l5-5 14 13-5 6z" fill="#fff" />
              <path d="M12 22l9 8.500" strokeWidth="2" /><path d="M29 7l5-5 7 6-5 6z" fill="#fff" />
              <path d="M20 11l6-6 14 13-6 6z" fill="#fff" /><path d="M22 11l12 11" strokeWidth="5" strokeLinecap="butt" />
            </Svg>
            <BigLine>敏感</BigLine>
            <BigLine>性<Chevron /></BigLine>
          </HomeBig>
          <HomeLabel>敏感度</HomeLabel>
        </HomeGroup>
        <Divider $thin $m="7px 0 9px" />
        <HomeGroup $w={87}>
          <HomeBig type="button" $top={5} $gap={5}>
            <Svg width="44" height="49" viewBox="0 0 44 49"><path d="M14 38h28v8H12z" fill="#1757b5" stroke="none" /><path d="M1 47l5-14L24 3l8 5-18 30z" fill="#fff" stroke="#1757b5" /><path d="M1 47l3-9 6 4z" fill="#1757b5" stroke="#1757b5" /></Svg>
            <BigLine>编</BigLine>
            <BigLine>辑<Chevron /></BigLine>
          </HomeBig>
          <HomeLabel>编辑器</HomeLabel>
        </HomeGroup>
      </TargetRibbon>
    </RibbonShade>
    <TargetRuler />
    <Workspace>
      <SideRuler />
      <Gutter />
      <Page $pad={218}>
        <Corner $s={44} $b={2} $top={85} />
        <DocTitle $w={1008} $size={34} $m="14px 0 37px" />
        <EntryTable mark={16} $w={1009} $size={26} $row={39} $head={40} $pad={13} />
        <LastLine $caret $top={4}><ParagraphMark s={16} /></LastLine>
      </Page>
    </Workspace>
  </TargetWindow>
);

/* ---------- annotations over both windows ---------- */

const Overlay = styled.svg`
  position: absolute;
  top: 0;
  left: 0;
  pointer-events: none;
`;

const Annotation = () => (
  <Overlay width="1919" height="942" viewBox="0 0 1919 942" aria-hidden="true">
    <path d="M502 456L1054 699" stroke="#fb0d05" strokeWidth="6" strokeLinecap="round" strokeDasharray="6 12.300" />
    <path d="M1057 688l15 18-22 1 5-7z" fill="#fb0d05" />
    <g fill="none" stroke="#000" strokeOpacity=".02" strokeWidth="2">
      <circle cx="1823" cy="847" r="78" />
      <circle cx="1823" cy="847" r="70" />
    </g>
    <circle cx="1844" cy="806" r="7" fill="#fde2b6" />
  </Overlay>
);

const Defs = styled.svg`
  position: absolute;
  width: 0;
  height: 0;
`;

export default function App() {
  return (
    <Desktop>
      <Global />
      <Defs aria-hidden="true">
        <linearGradient id="sky" gradientUnits="userSpaceOnUse" x1="0" y1="0" x2="20" y2="14">
          <stop offset="0" stopColor="#39b3fb" />
          <stop offset="1" stopColor="#1467e6" />
        </linearGradient>
      </Defs>
      <BackApp />
      <SourceApp />
      <TargetShadow />
      <TargetApp />
      <Annotation />
    </Desktop>
  );
}
